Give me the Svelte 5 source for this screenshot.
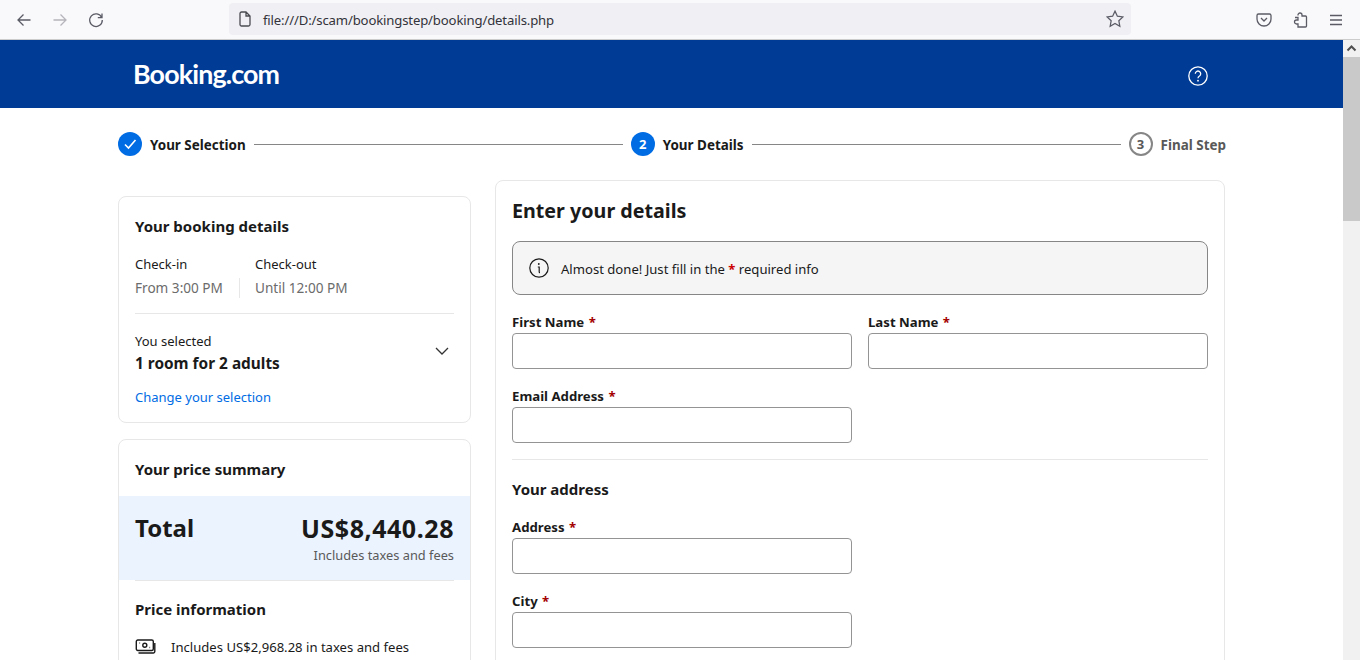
<script>
  const firstRow = ['First Name', 'Last Name'];
</script>

<div class="window">
  <div class="toolbar">
    <div class="nav">
      <svg class="tool" viewBox="0 0 16 16"><path d="M14.5 8H2M7.5 2.5 2 8l5.5 5.5" /></svg>
      <svg class="tool off" viewBox="0 0 16 16"><path d="M1.5 8H14M8.5 2.5 14 8l-5.5 5.5" /></svg>
      <svg class="tool" viewBox="0 0 16 16"><path d="M13.7 5.5A6.3 6.3 0 1 0 14.3 8M14 1.5v4.2H9.8" /></svg>
    </div>
    <div class="urlbar">
      <svg class="page-icon" viewBox="0 0 16 16"><path d="M3 2.500A1.500 1.500 0 0 1 4.500 1H9l4 4v8.500a1.500 1.500 0 0 1-1.500 1.500h-7A1.500 1.500 0 0 1 3 13.500zM9 1v4h4" /></svg>
      <span class="url">file:///D:/scam/bookingstep/booking/details.php</span>
      <svg class="star" viewBox="0 0 16 16"><path d="m8 1 2.100 4.500 4.900.6-3.600 3.400.9 4.900L8 11.900l-4.300 2.500.9-4.900L1 6.100l4.900-.6z" /></svg>
    </div>
    <div class="actions">
      <svg class="tool" viewBox="0 0 16 16"><path d="M2.500 2h11A1.500 1.500 0 0 1 15 3.500V7A7 7 0 0 1 1 7V3.500A1.500 1.500 0 0 1 2.500 2zM5 6l3 3 3-3" /></svg>
      <svg class="tool" viewBox="0 0 16 16"><path d="M6 3.500V3a2 2 0 0 1 4 0v1h3.500a1 1 0 0 1 1 1v9a1 1 0 0 1-1 1H6v-3H4.500a2 2 0 0 1 0-4H6V5.500H3" /></svg>
      <svg class="tool" viewBox="0 0 16 16"><path d="M2 3.500h12M2 8h12M2 12.500h12" /></svg>
    </div>
  </div>

  <div class="viewport">
    <div class="page">
      <header class="topbar">
        <span class="logo">Booking.com</span>
        <svg class="help" viewBox="0 0 20 20">
          <circle cx="10" cy="10" r="9.200" />
          <path d="M7.300 7.800a2.700 2.700 0 1 1 4.200 2.200c-1 .6-1.500 1.100-1.500 2.300" />
          <circle class="dot" cx="10" cy="14.700" r="0.900" />
        </svg>
      </header>

      <div class="container">
        <div class="stepper">
          <span class="bullet filled">
            <svg viewBox="0 0 24 24"><path d="m7 12.500 3.500 3.500L17.500 8" /></svg>
          </span>
          <span class="step-name">Your Selection</span>
          <span class="line"></span>
          <span class="bullet filled">2</span>
          <span class="step-name">Your Details</span>
          <span class="line"></span>
          <span class="bullet ring">3</span>
          <span class="step-name muted">Final Step</span>
        </div>

        <div class="columns">
          <aside class="side">
            <section class="card booking">
              <h3>Your booking details</h3>
              <div class="times">
                <div class="time">
                  <div>Check-in</div>
                  <div class="grey">From 3:00 PM</div>
                </div>
                <div class="time second">
                  <div>Check-out</div>
                  <div class="grey">Until 12:00 PM</div>
                </div>
              </div>
              <hr />
              <div class="selected">
                <div>
                  <div class="you">You selected</div>
                  <div class="rooms">1 room for 2 adults</div>
                </div>
                <svg class="chev" viewBox="0 0 14 8"><path d="m1 1 6 6 6-6" /></svg>
              </div>
              <a class="change" href="#top">Change your selection</a>
            </section>

            <section class="card price">
              <h3 class="price-title">Your price summary</h3>
              <div class="total">
                <span class="total-label">Total</span>
                <div class="amount">
                  <div class="sum">US$8,440.28</div>
                  <div class="incl">Includes taxes and fees</div>
                </div>
              </div>
              <div class="info">
                <h3>Price information</h3>
                <div class="fee">
                  <svg viewBox="0 0 20 16">
                    <rect x="0.800" y="1" width="17" height="10.500" rx="1.500" />
                    <circle cx="9.300" cy="6.200" r="2" />
                    <path d="M19.300 4v8.500a1.500 1.500 0 0 1-1.500 1.500H3M4 4h.6M14 8.500h.6" />
                  </svg>
                  <span>Includes US$2,968.28 in taxes and fees</span>
                </div>
              </div>
            </section>
          </aside>

          <main class="card form">
            <h2>Enter your details</h2>
            <div class="notice">
              <svg viewBox="0 0 20 20">
                <circle cx="10" cy="10" r="9.200" />
                <path d="M8.800 9h1.400v5c0 .5.300.7.800.7" />
                <circle class="dot" cx="9.800" cy="6" r="0.900" />
              </svg>
              <span class="notice-text">Almost done! Just fill in the <b>*</b> required info</span>
            </div>

            <div class="row">
              {#each firstRow as name}
                <label class="field">
                  <span class="label">{name} <b>*</b></span>
                  <input type="text" />
                </label>
              {/each}
            </div>
            <div class="row">
              <label class="field">
                <span class="label">Email Address <b>*</b></span>
                <input type="email" />
              </label>
            </div>

            <hr class="split" />
            <h3 class="address">Your address</h3>

            <div class="row">
              <label class="field">
                <span class="label">Address <b>*</b></span>
                <input type="text" />
              </label>
            </div>
            <div class="row">
              <label class="field">
                <span class="label">City <b>*</b></span>
                <input type="text" />
              </label>
            </div>
          </main>
        </div>
      </div>
    </div>

    <div class="scrollbar">
      <svg viewBox="0 0 17 17"><path d="m4.500 10.500 4-4 4 4" /></svg>
      <div class="thumb"></div>
    </div>
  </div>
</div>

<style>
:global(body) {
  margin: 0;
  overflow: hidden;
  background: #fff;
}
.window {
  height: 660px;
  display: flex;
  flex-direction: column;
  font-family: "Noto Sans", "Open Sans", sans-serif;
  color: #1a1a1a;
  font-size: 13px;
}
.toolbar {
  height: 39px;
  flex: none;
  display: flex;
  align-items: center;
  background: #f9f9fb;
  border-bottom: 1px solid #ccc;
}
.nav {
  display: flex;
  gap: 20px;
  padding-left: 16px;
  width: 213px;
}
.tool {
  width: 16px;
  height: 16px;
  fill: none;
  stroke: #5b5b66;
  stroke-width: 1.300;
}
.tool.off {
  stroke: #b5b5bb;
}
.urlbar {
  width: 902px;
  height: 32px;
  margin-top: -1px;
  box-sizing: border-box;
  padding: 0 7px 0 8px;
  display: flex;
  align-items: center;
  background: #f0f0f4;
  border-radius: 4px;
}
.page-icon {
  width: 16px;
  height: 16px;
  fill: none;
  stroke: #4a4a52;
  stroke-width: 1.300;
  margin-right: 10px;
}
.url {
  flex: 1;
  font-size: 13.150px;
  line-height: 20px;
  padding-top: 1px;
  color: #33333b;
  letter-spacing: -0.150px;
}
.star {
  width: 18px;
  height: 18px;
  fill: none;
  stroke: #5b5b66;
  stroke-width: 1.100;
}
.actions {
  display: flex;
  gap: 20px;
  padding-left: 125px;
}
.viewport {
  flex: 1;
  min-height: 0;
  display: flex;
}
.page {
  flex: 1;
  min-width: 0;
  overflow: hidden;
}
.topbar {
  height: 68px;
  background: #003b95;
  display: flex;
  align-items: center;
  justify-content: space-between;
  padding: 0 135px 0 133px;
}
.logo {
  font-family: "Lato", sans-serif;
  font-size: 26.800px;
  font-weight: 700;
  color: #fff;
  letter-spacing: -0.850px;
}
.help {
  width: 20px;
  height: 20px;
  margin-top: 4px;
  fill: none;
  stroke: #fff;
  stroke-width: 1.300;
}
.help .dot, .notice .dot {
  stroke: none;
}
.help .dot {
  fill: #fff;
}
.container {
  width: 1107px;
  margin-left: 118px;
}
.stepper {
  height: 72px;
  margin-right: -1px;
  display: flex;
  align-items: center;
}
.bullet {
  width: 24px;
  height: 24px;
  box-sizing: border-box;
  border-radius: 50%;
  flex: none;
  display: flex;
  align-items: center;
  justify-content: center;
  font-size: 13px;
  font-weight: 700;
}
.bullet svg {
  width: 24px;
  height: 24px;
  fill: none;
  stroke: #fff;
  stroke-width: 1.600;
}
.filled {
  background: #006ce4;
  color: #fff;
}
.ring {
  border: 2px solid #868686;
  color: #595959;
}
.step-name {
  margin-left: 8px;
  font-size: 13.450px;
  line-height: 20px;
  padding-top: 2px;
  font-weight: 700;
  white-space: nowrap;
}
.step-name.muted {
  color: #595959;
}
.line {
  flex: 1;
  height: 1px;
  background: #868686;
  margin: 0 8px;
}
.columns {
  display: flex;
  gap: 24px;
  align-items: flex-start;
}
.side {
  width: 353px;
  flex: none;
  padding-top: 16px;
  display: flex;
  flex-direction: column;
  gap: 16px;
}
.card {
  box-sizing: border-box;
  background: #fff;
  border: 1px solid #e7e7e7;
  border-radius: 8px;
}
h2, h3 {
  margin: 0;
  font-weight: 700;
}
h3 {
  font-size: 15px;
  line-height: 20px;
}
.booking {
  height: 227px;
  padding: 19px 16px 0;
}
.times {
  display: flex;
  margin-top: 16px;
  line-height: 24px;
  font-size: 13px;
}
.time {
  width: 120px;
  position: relative;
}
.time.second {
  width: auto;
}
.time.second::before {
  content: "";
  position: absolute;
  left: -16px;
  bottom: 2px;
  width: 1px;
  height: 20px;
  background: #e7e7e7;
}
.grey {
  color: #6b6b6b;
  font-size: 13.600px;
}
hr {
  border: 0;
  height: 1px;
  background: #e7e7e7;
  margin: 13px 0 0;
}
.selected {
  display: flex;
  align-items: center;
  justify-content: space-between;
  padding: 17px 5px 0 0;
}
.you {
  font-size: 13px;
  line-height: 20px;
}
.rooms {
  font-size: 15.400px;
  font-weight: 700;
  line-height: 24px;
  padding-top: 1px;
  margin-bottom: -1px;
}
.chev {
  width: 14px;
  height: 8px;
  margin-top: -4px;
  fill: none;
  stroke: #333;
  stroke-width: 1.300;
}
.change {
  display: block;
  margin-top: 12px;
  line-height: 20px;
  font-size: 13px;
  color: #006ce4;
  text-decoration: none;
}
.price {
  overflow: hidden;
  height: 300px;
}
.price-title {
  padding: 19px 16px 17px;
}
.total {
  height: 84px;
  box-sizing: border-box;
  padding: 16px 16px 0;
  background: #ebf3ff;
  display: flex;
  justify-content: space-between;
}
.total-label {
  font-size: 24px;
  line-height: 32px;
  font-weight: 700;
}
.amount {
  text-align: right;
}
.sum {
  font-size: 25px;
  line-height: 32px;
  font-weight: 700;
  letter-spacing: 0.550px;
}
.incl {
  font-size: 12.800px;
  line-height: 22px;
  color: #595959;
}
.info {
  margin: 0 16px;
  padding-top: 18px;
  border-top: 1px solid #e7e7e7;
}
.fee {
  display: flex;
  align-items: center;
  gap: 15px;
  margin-top: 18px;
  font-size: 13.100px;
  line-height: 20px;
}
.fee svg {
  width: 21px;
  height: 16px;
  flex: none;
  fill: none;
  stroke: #1a1a1a;
  stroke-width: 1.400;
}
.form {
  flex: 1;
  height: 640px;
  padding: 16px 16px 0;
}
h2 {
  font-size: 19.700px;
  line-height: 28px;
}
.notice {
  height: 54px;
  box-sizing: border-box;
  margin-top: 16px;
  padding: 0 16px;
  display: flex;
  align-items: center;
  gap: 12px;
  background: #f5f5f5;
  border: 1px solid #868686;
  border-radius: 8px;
  font-size: 13.100px;
}
.notice-text {
  padding-top: 1px;
}
.notice svg {
  width: 20px;
  height: 20px;
  flex: none;
  fill: none;
  stroke: #1a1a1a;
  stroke-width: 1.200;
}
.notice .dot {
  fill: #1a1a1a;
}
.notice b, .label b {
  color: #c00;
  font-weight: 700;
}
.label b {
  color: #a30000;
  margin-left: 1px;
}
.row {
  display: flex;
  gap: 16px;
  margin-top: 17px;
}
.field {
  width: 340px;
  display: block;
}
.label {
  display: block;
  font-size: 13.200px;
  font-weight: 700;
  line-height: 20px;
  height: 21px;
}
input {
  display: block;
  width: 100%;
  height: 36px;
  box-sizing: border-box;
  border: 1px solid #949494;
  border-radius: 4px;
  background: #fff;
  margin: 0;
  padding: 0 8px;
}
.split {
  margin: 16px 0 0;
}
.address {
  margin-top: 19px;
}
.address + .row {
  margin-top: 18px;
}
.scrollbar {
  width: 17px;
  flex: none;
  background: #f1f1f1;
}
.scrollbar svg {
  display: block;
  width: 17px;
  height: 17px;
  fill: none;
  stroke: #505050;
  stroke-width: 2;
}
.thumb {
  height: 164px;
  background: #c9c9c9;
}
</style>
